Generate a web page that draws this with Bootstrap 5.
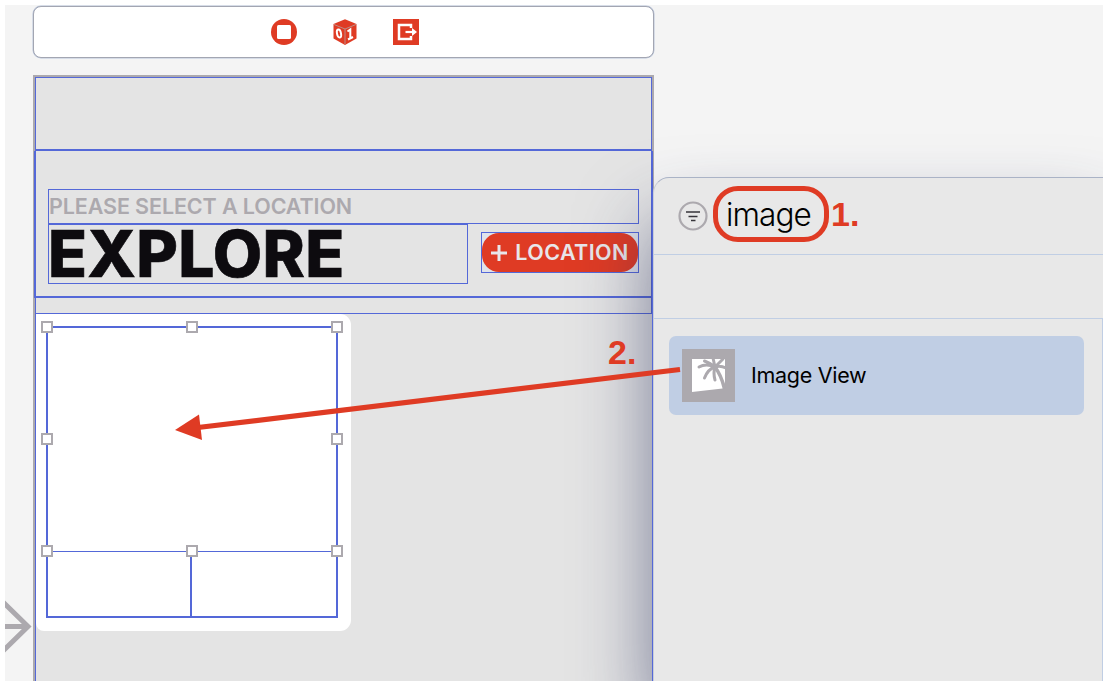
<!DOCTYPE html>
<html lang="en">
<head>
<meta charset="utf-8">
<title>Explore storyboard</title>
<link href="https://cdn.jsdelivr.net/npm/bootstrap@5.3.0/dist/css/bootstrap.min.css" rel="stylesheet">
<style>
:root{--line:#5468d8;--red:#df3b24;--gray:#aca9ae;--pale:#c0cee4}
body{background:#fff;font-family:Inter,"Liberation Sans",sans-serif;color:#0d0b0f;height:686px;padding:5px}
.stage{width:1098px;height:676px;background:#f4f4f4}
.gutter{width:28px;padding-top:595px}
.canvas-col{width:621px}
.dock{margin-top:1px;height:52px;border:1px solid #a3a6b2;border-radius:8px;box-shadow:0 0 0 .5px #b7c3da;gap:33px;padding-left:11px;padding-bottom:1px}
.scene{margin-top:17px;height:606px;border:2px solid var(--gray);border-bottom:0;background:#e4e4e4}
.scene-top{height:74px;border:1px solid var(--line);border-bottom:2px solid var(--line)}
.scene-head{height:147px;margin:0 -1px;border:solid var(--line);border-width:0 2px 2px;padding:38px 12px 0 12px}
.kicker{height:35px;width:591px;border:1px solid var(--line);color:var(--gray);font-size:21.5px;font-weight:600;line-height:33px;letter-spacing:-.11px}
.title-box{width:420px;height:61px;margin-top:-1px;border:1px solid var(--line);border-top-width:2px;font-size:64px;font-weight:800;line-height:58px;letter-spacing:.25px}
.title-box span{margin-left:-1px;-webkit-text-stroke:.6px #0d0b0f}
.pill-box{margin-top:8px;width:158px;height:41px;border:1px solid var(--line);background:#e0e3ea}
.pill{background:var(--red);border-radius:17px;color:#e8e6ea;font-size:21.5px;font-weight:600;letter-spacing:.4px;line-height:39px}
.spacer{height:16px;border:1px solid var(--line);border-top:0}
.scene-body{height:367px;border-left:1px solid var(--line)}
.cell-card{width:315px;height:317px;background:#fff;border-radius:0 11px 11px 8px;padding:12px 0 0 10px}
.cell-box{width:292px;height:292px;border:2px solid var(--line)}
.cell-top{height:224px;border-bottom:1px solid var(--line)}
.cell-low{width:144px;height:64px;border-right:2px solid var(--line)}
.grip{position:absolute;width:12px;height:12px;border:2px solid var(--gray);background:#fff;transform:translate(-50%,-50%)}
.library{width:450px;height:504px;margin-top:172px;margin-left:-1px;background:#e8e8e8;border-top:1px solid #aab3c6;border-left:1px solid #c9cdd8;border-top-left-radius:16px;box-shadow:0 46px 74px rgba(38,44,92,.58)}
.library::before{content:"";position:absolute;left:-2px;top:14px;bottom:0;width:1px;background:var(--line)}
.search{height:77px;border-bottom:1px solid var(--pale);padding-left:24px}
.ring{width:116px;height:56px;margin:-4px 0 0 5px;border:5px solid var(--red);border-radius:25px;font-size:31.5px;font-weight:300;letter-spacing:-.9px;line-height:48px;color:#000;padding-right:5px}
.step{color:var(--red);font:bold 34px/1 "Liberation Sans",sans-serif}
.step1{margin:-4px 0 0 2px}
.band{height:63px}
.results{height:363px;width:449px;border-top:1px solid var(--pale);border-right:1px solid var(--pale);padding:17px 18px 0 15px}
.hit{height:79px;background:#c0cee4;border-radius:7px;padding-left:13px;font-size:21.5px;letter-spacing:-.28px;color:#000}
.over{inset:0;z-index:3;pointer-events:none}
.step2{left:603px;top:330px;z-index:3}
</style>
</head>
<body>
<main class="stage position-relative d-flex overflow-hidden">
  <div class="gutter flex-shrink-0">
    <svg class="d-block" width="28" height="56" viewBox="0 0 28 56" fill="none" stroke="#aca9ae" stroke-width="5"><path d="M-3 1L23 26.500L-3 52M-2 26.500H22"/></svg>
  </div>
  <section class="canvas-col flex-shrink-0">
    <div class="dock bg-white d-flex align-items-center justify-content-center">
      <svg width="28" height="28" viewBox="0 0 28 28" style="margin-left:-8px"><circle cx="14" cy="14" r="13" fill="#df3b24"/><rect x="7" y="7" width="14" height="14" rx="1.500" fill="#fff"/></svg>
      <svg width="28" height="28" viewBox="0 0 28 28"><path d="M14 1.300L25.500 6V20.500L14 27L2.500 20.500V6Z" fill="#df3b24"/><path d="M3 6.500L14 11L25 6.500M14 11V26" fill="none" stroke="#bd8d86" stroke-width="1"/><ellipse cx="8" cy="15.500" rx="2" ry="4" transform="rotate(-12 8 15.500)" fill="none" stroke="#fff" stroke-width="2"/><path d="M16.500 13.500L19.300 11.500V20.500M17 21.500L22 19" fill="none" stroke="#fff" stroke-width="2"/></svg>
      <svg width="28" height="28" viewBox="0 0 28 28"><rect x="1" y="1" width="26" height="26" fill="#df3b24"/><path d="M19 10V7H7V21H19V18" fill="none" stroke="#fff" stroke-width="2.500"/><path d="M13.500 14H22" stroke="#fff" stroke-width="2.200"/><path d="M20 10L25 14L20 18Z" fill="#fff"/></svg>
    </div>
    <div class="scene">
      <div class="scene-top"></div>
      <div class="scene-head">
        <div class="kicker text-nowrap"><span>PLEASE SELECT A LOCATION</span></div>
        <div class="d-flex justify-content-between align-items-start">
          <div class="title-box"><span>EXPLORE</span></div>
          <div class="pill-box"><div class="pill h-100 d-flex justify-content-center align-items-center text-nowrap"><svg class="me-2" width="16" height="16" viewBox="0 0 16 16" stroke="#e8e6ea" stroke-width="3"><path d="M8 0V16M0 8H16"/></svg>LOCATION</div></div>
        </div>
      </div>
      <div class="spacer"></div>
      <div class="scene-body">
        <div class="cell-card">
          <div class="cell-box position-relative">
            <div class="cell-top"></div>
            <div class="cell-low"></div>
            <i class="grip" style="left:-1px;top:-1px"></i><i class="grip" style="left:144px;top:-1px"></i><i class="grip" style="left:289px;top:-1px"></i>
            <i class="grip" style="left:-1px;top:111px"></i><i class="grip" style="left:289px;top:111px"></i>
            <i class="grip" style="left:-1px;top:223px"></i><i class="grip" style="left:144px;top:223px"></i><i class="grip" style="left:289px;top:223px"></i>
          </div>
        </div>
      </div>
    </div>
  </section>
  <aside class="library position-relative flex-shrink-0">
    <div class="search d-flex align-items-center">
      <svg width="30" height="30" viewBox="0 0 30 30" fill="none"><circle cx="15" cy="15" r="13.500" stroke="#aca9ae" stroke-width="2.200"/><path d="M8 11H22M10.500 15.500H19.500M13 19.500H17.500" stroke="#36343a" stroke-width="1.500"/></svg>
      <div class="ring text-center">image</div>
      <span class="step step1">1.</span>
    </div>
    <div class="band"></div>
    <div class="results">
      <div class="hit d-flex align-items-center gap-3">
        <svg width="53" height="53" viewBox="0 0 53 53"><path fill="#aca9ae" d="M0 0H53V53H0Z"/><path fill="#fff" d="M10 10H43V33L40.500 39.500L10 43Z"/><g stroke="#aca9ae" stroke-linecap="round" fill="none" stroke-width="3"><path d="M33 18Q24 14 17 18M33 18Q28 14 22.500 12M33 18Q26 20 22.500 29M33 18Q31 24 33 31M33 18L31 9M33 18L41 10M33 18Q38 16 44 19"/><path d="M33 18Q39 26 42 38" stroke-width="3.500"/></g></svg>
        <span>Image View</span>
      </div>
    </div>
  </aside>
  <span class="step step2 position-absolute">2.</span>
  <svg class="over position-absolute" width="1098" height="676" viewBox="5 5 1098 676"><path d="M680 369.500L198 427.500" stroke="#df3b24" stroke-width="5.200"/><path d="M175 430L199 414.500L202 440Z" fill="#df3b24"/></svg>
</main>
<script src="https://cdn.jsdelivr.net/npm/bootstrap@5.3.0/dist/js/bootstrap.bundle.min.js"></script>
</body>
</html>
